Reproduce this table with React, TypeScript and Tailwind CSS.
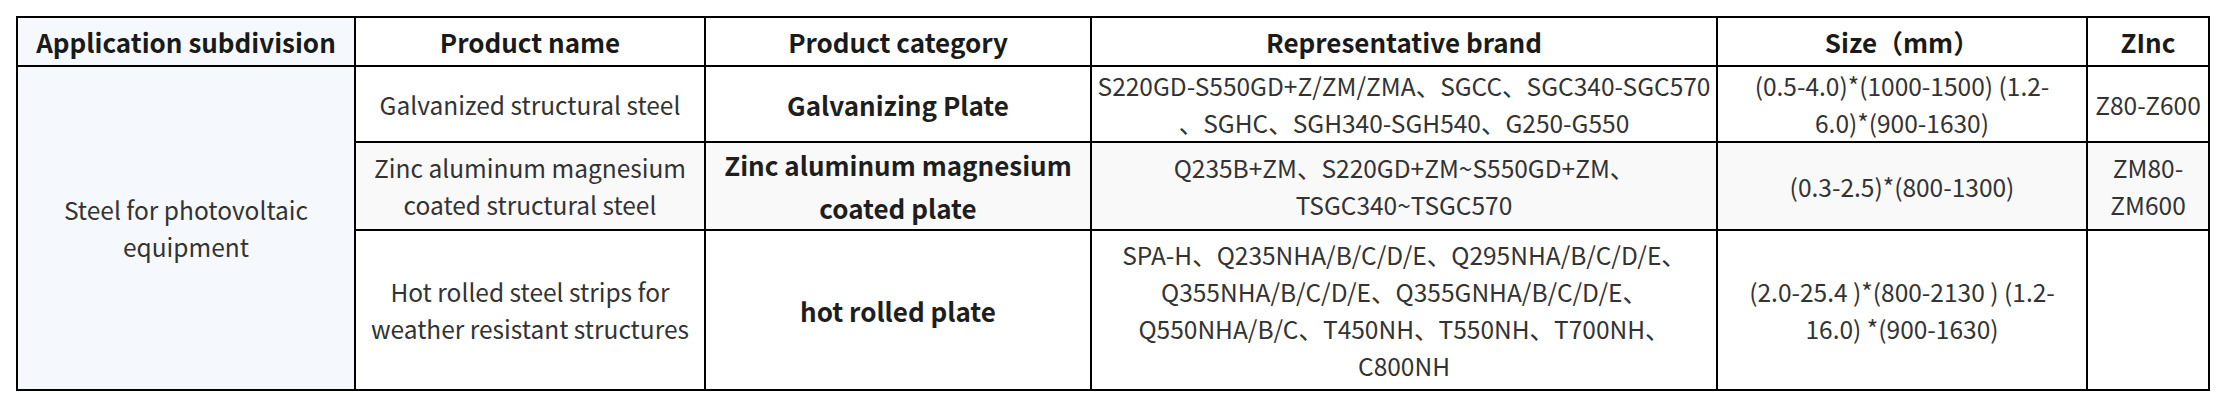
const headers = [
  "Application subdivision",
  "Product name",
  "Product category",
  "Representative brand",
  "Size（mm）",
  "ZInc",
];

type Row = {
  name: string[];
  category: string[];
  brand: string[];
  size: string[];
  zinc: string[];
  shaded?: boolean;
  pad?: string;
};

const rows: Row[] = [
  {
    name: ["Galvanized structural steel"],
    category: ["Galvanizing Plate"],
    brand: ["S220GD-S550GD+Z/ZM/ZMA、SGCC、SGC340-SGC570", "、SGHC、SGH340-SGH540、G250-G550"],
    size: ["(0.5-4.0)*(1000-1500) (1.2-", "6.0)*(900-1630)"],
    zinc: ["Z80-Z600"],
  },
  {
    name: ["Zinc aluminum magnesium", "coated structural steel"],
    category: ["Zinc aluminum magnesium", "coated plate"],
    brand: ["Q235B+ZM、S220GD+ZM~S550GD+ZM、", "TSGC340~TSGC570"],
    size: ["(0.3-2.5)*(800-1300)"],
    zinc: ["ZM80-", "ZM600"],
    shaded: true,
  },
  {
    name: ["Hot rolled steel strips for", "weather resistant structures"],
    category: ["hot rolled plate"],
    brand: [
      "SPA-H、Q235NHA/B/C/D/E、Q295NHA/B/C/D/E、",
      "Q355NHA/B/C/D/E、Q355GNHA/B/C/D/E、",
      "Q550NHA/B/C、T450NH、T550NH、T700NH、",
      "C800NH",
    ],
    size: ["(2.0-25.4 )*(800-2130 ) (1.2-", "16.0) *(900-1630)"],
    zinc: [],
    pad: "py-[5px]",
  },
];

function Lines({ lines }: { lines: string[] }) {
  return (
    <>
      {lines.map((l, i) => (
        <span key={i} className="block whitespace-nowrap">
          {l}
        </span>
      ))}
    </>
  );
}

const cell = "border-2 border-black px-1 py-0 text-center align-middle";
const body = "text-[24.5px] leading-[37px] text-[#333333]";
const bold = "text-[26px] leading-[43px] font-bold text-[#1e1e1e]";
const head = "text-[26px] leading-[47px] font-bold text-[#1a1a1a]";

export default function App() {
  return (
    <div className="w-[2226px] h-[404px] bg-white pt-[16px] pl-[16px] font-['Noto_Sans_CJK_SC','Noto_Sans',sans-serif]">
      <table className="table-fixed border-collapse w-[2192px]">
        <colgroup>
          <col className="w-[338px]" />
          <col className="w-[350px]" />
          <col className="w-[386px]" />
          <col className="w-[626px]" />
          <col className="w-[370px]" />
          <col className="w-[122px]" />
        </colgroup>
        <thead>
          <tr>
            {headers.map((h, i) => (
              <th
                key={h}
                className={`${cell} ${head} ${i === 0 ? "bg-[#f5f9fd]" : "bg-white"}`}
              >
                {h}
              </th>
            ))}
          </tr>
        </thead>
        <tbody>
          {rows.map((r, i) => (
            <tr key={i} className={r.shaded ? "bg-[#f9f9f9]" : "bg-white"}>
              {i === 0 && (
                <td rowSpan={3} className={`${cell} ${body} bg-[#f5f9fd]`}>
                  <Lines lines={["Steel for photovoltaic", "equipment"]} />
                </td>
              )}
              <td className={`${cell} ${body}`}>
                <Lines lines={r.name} />
              </td>
              <td className={`${cell} ${bold}`}>
                <Lines lines={r.category} />
              </td>
              <td className={`${cell} ${body} ${r.pad ?? ""}`}>
                <Lines lines={r.brand} />
              </td>
              <td className={`${cell} ${body}`}>
                <Lines lines={r.size} />
              </td>
              <td className={`${cell} ${body}`}>
                <Lines lines={r.zinc} />
              </td>
            </tr>
          ))}
        </tbody>
      </table>
    </div>
  );
}
